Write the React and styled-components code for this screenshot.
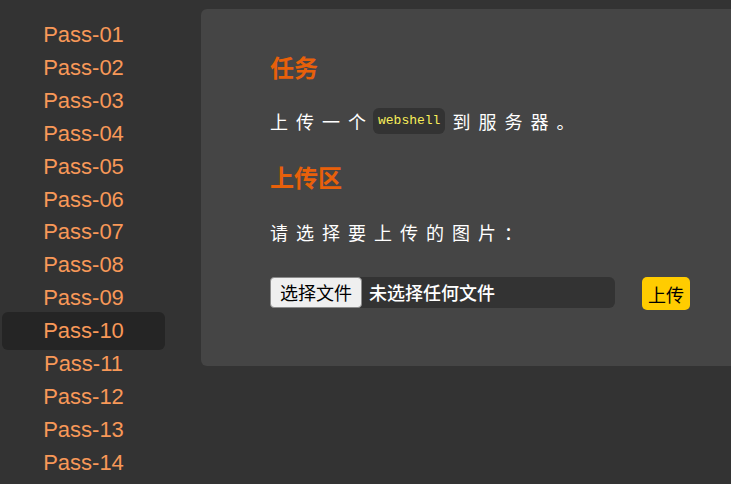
import React from "react";
import styled, { createGlobalStyle } from "styled-components";

const GlobalStyle = createGlobalStyle`
  html, body {
    margin: 0;
    padding: 0;
    background: #333333;
    overflow: hidden;
  }
  body {
    font-family: "Liberation Sans", "Noto Sans CJK SC", sans-serif;
  }
`;

const Layout = styled.div`
  display: flex;
  align-items: flex-start;
  min-height: 484px;
  padding-top: 9px;
  box-sizing: border-box;
`;

const Sidebar = styled.nav`
  flex: 0 0 auto;
  width: 163px;
  padding: 7px 0 0 2px;
  display: flex;
  flex-direction: column;
`;

const NavItem = styled.a`
  display: flex;
  align-items: center;
  justify-content: center;
  height: 38px;
  margin-bottom: -5.1px;
  border-radius: 6px;
  font-family: "Liberation Sans", Arial, sans-serif;
  font-size: 22px;
  color: #f89858;
  text-decoration: none;
  background: ${(p) => (p.$active ? "#252525" : "transparent")};
`;

const Panel = styled.main`
  flex: 1 1 auto;
  margin-left: 36px;
  background: #454545;
  border-radius: 6px 0 0 6px;
  padding: 42px 0 56px 69px;
  color: #ffffff;
  font-family: "Noto Sans CJK SC", "Noto Sans", sans-serif;
`;

const Heading = styled.h2`
  margin: ${(p) => p.$mt || 0}px 0 0 0;
  font-size: 24px;
  line-height: 32px;
  font-weight: 700;
  color: #e8600a;
`;

const Text = styled.p`
  margin: ${(p) => p.$mt || 0}px 0 0 0;
  font-size: 18px;
  line-height: 26px;
  letter-spacing: 8px;
  color: #ffffff;
  display: flex;
  align-items: center;
`;

const Code = styled.code`
  display: inline-flex;
  align-items: center;
  height: 26px;
  padding: 0 5px;
  margin: 0 7px 0 -1px;
  background: #333333;
  border-radius: 6px;
  font-family: "Liberation Mono", "DejaVu Sans Mono", monospace;
  font-size: 13px;
  letter-spacing: 0;
  color: #f8ef5a;
`;

const UploadRow = styled.form`
  margin-top: 29px;
  display: flex;
  align-items: center;
  gap: 27px;
`;

const FileBox = styled.label`
  display: flex;
  align-items: center;
  width: 345px;
  height: 31px;
  background: #333333;
  border-radius: 6px;
  font-size: 18px;
`;

const ChooseButton = styled.span`
  display: flex;
  align-items: center;
  box-sizing: border-box;
  height: 31px;
  padding: 0 9px;
  background: #efefef;
  border: 1px solid #8a8a8a;
  border-radius: 4px;
  color: #000000;
  font-size: 18px;
`;

const FileName = styled.span`
  margin-left: 7px;
  color: #ffffff;
  font-size: 18px;
  font-weight: 500;
`;

const SubmitButton = styled.button`
  height: 33px;
  padding: 0 6px;
  border: none;
  border-radius: 5px;
  background: #ffcc00;
  color: #000000;
  font-family: "Noto Sans CJK SC", sans-serif;
  font-size: 18px;
  margin-top: 3px;
`;

const passes = Array.from({ length: 14 }, (_, i) =>
  `Pass-${String(i + 1).padStart(2, "0")}`
);

export default function App() {
  return (
    <>
      <GlobalStyle />
      <Layout>
        <Sidebar>
          {passes.map((p) => (
            <NavItem key={p} href="#" $active={p === "Pass-10"}>
              {p}
            </NavItem>
          ))}
        </Sidebar>
        <Panel>
          <Heading>任务</Heading>
          <Text $mt={25}>
            上传一个<Code>webshell</Code>到服务器。
          </Text>
          <Heading $mt={27}>上传区</Heading>
          <Text $mt={26}>请选择要上传的图片：</Text>
          <UploadRow onSubmit={(e) => e.preventDefault()}>
            <FileBox>
              <ChooseButton>选择文件</ChooseButton>
              <FileName>未选择任何文件</FileName>
            </FileBox>
            <SubmitButton type="submit">上传</SubmitButton>
          </UploadRow>
        </Panel>
      </Layout>
    </>
  );
}
